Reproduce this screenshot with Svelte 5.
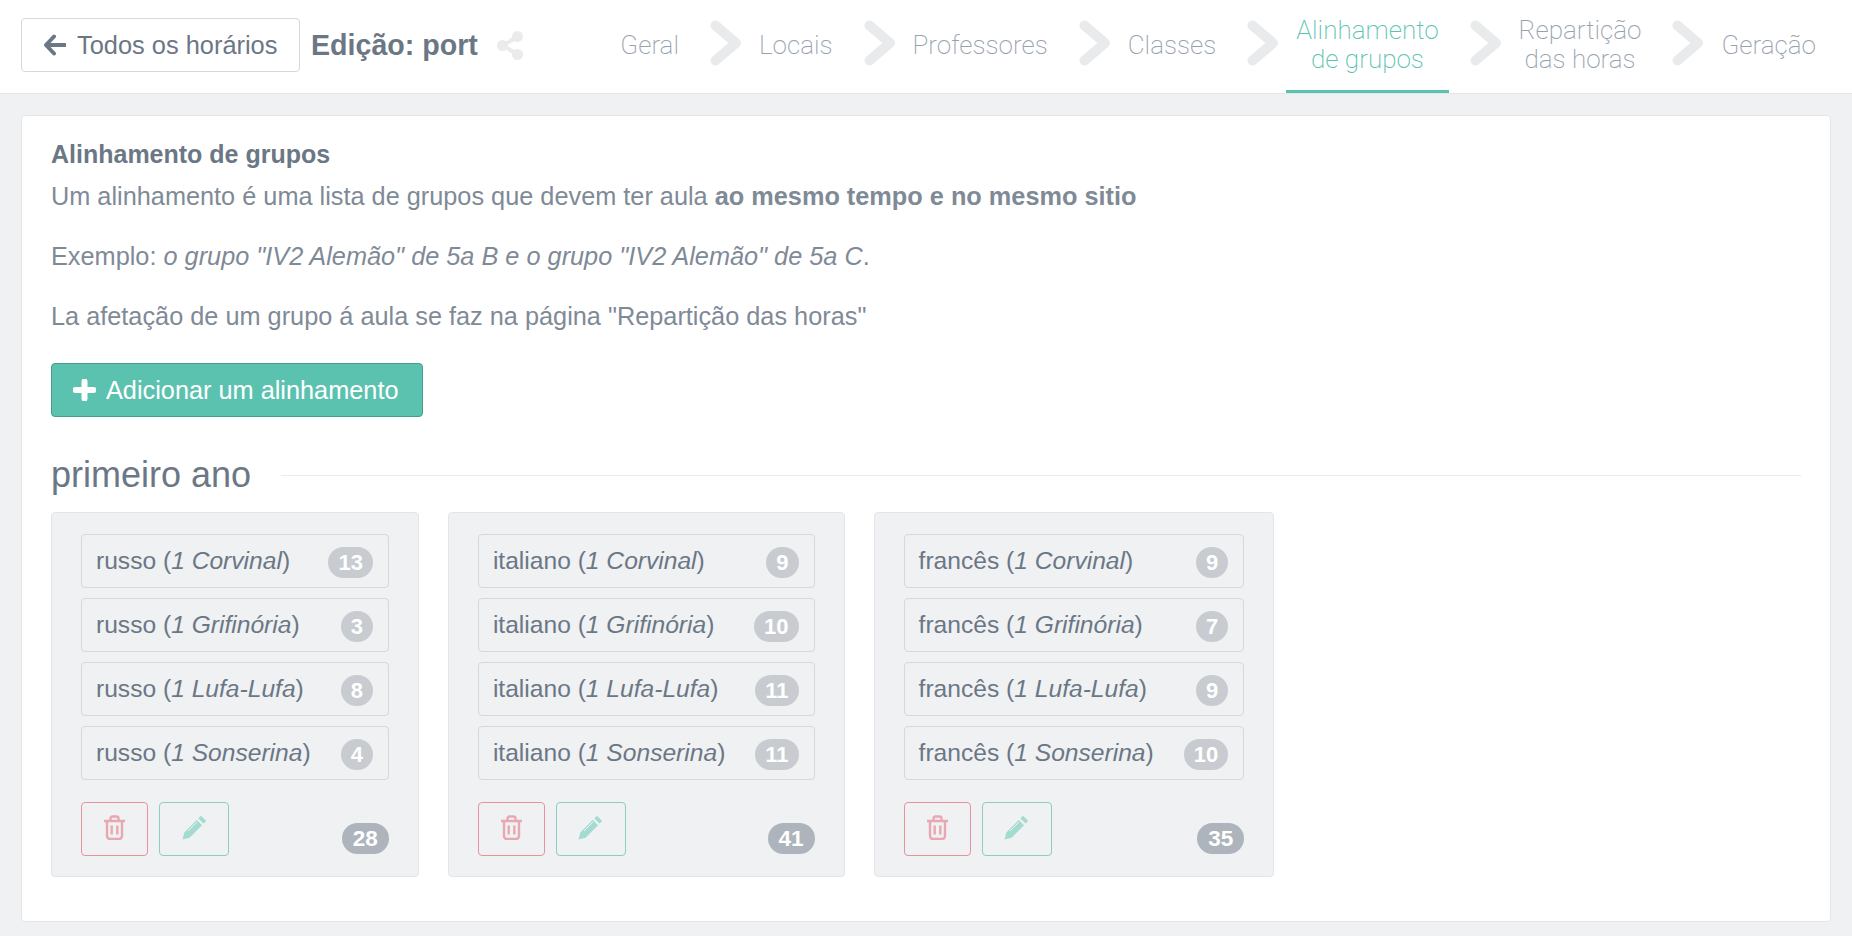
<script>
  const steps = [
    { label: ["Geral"] },
    { label: ["Locais"] },
    { label: ["Professores"] },
    { label: ["Classes"] },
    { label: ["Alinhamento", "de grupos"], active: true },
    { label: ["Repartição", "das horas"] },
    { label: ["Geração"] }
  ];

  const alignments = [
    {
      subject: "russo",
      counts: [13, 3, 8, 4],
      total: 28
    },
    {
      subject: "italiano",
      counts: [9, 10, 11, 11],
      total: 41
    },
    {
      subject: "francês",
      counts: [9, 7, 9, 10],
      total: 35
    }
  ];

  const classes = ["1 Corvinal", "1 Grifinória", "1 Lufa-Lufa", "1 Sonserina"];
</script>

<header class="topbar">
  <button class="back">
    <svg class="back-icon" viewBox="0 0 23 22" width="23" height="22">
      <path d="M11 2.5 3 11l8 8.5M4 11h18" fill="none" stroke="currentColor" stroke-width="4" stroke-linecap="round" stroke-linejoin="round" />
    </svg>
    Todos os horários
  </button>
  <h1 class="title">Edição: port</h1>
  <svg class="share" viewBox="0 0 26 29" width="26" height="29">
    <path d="M20 6 6 14.5 20 23" fill="none" stroke="#e9ebed" stroke-width="4" />
    <circle cx="20.5" cy="5.5" r="5.5" fill="#e9ebed" />
    <circle cx="5.5" cy="14.5" r="5.5" fill="#e9ebed" />
    <circle cx="20.5" cy="23.5" r="5.5" fill="#e9ebed" />
  </svg>

  <nav class="steps">
    {#each steps as step, i}
      {#if i > 0}
        <svg class="chevron" viewBox="0 0 32 46" width="32" height="46">
          <path d="M5.500 5.500 26 23 5.500 40.500" fill="none" stroke="#e9eaec" stroke-width="10" stroke-linecap="round" stroke-linejoin="round" />
        </svg>
      {/if}
      <div class="step" class:active={step.active}>
        <span>
          {#each step.label as line}
            <div>{line}</div>
          {/each}
        </span>
      </div>
    {/each}
  </nav>
</header>

<main class="page">
  <section class="panel">
    <h2 class="panel-title">Alinhamento de grupos</h2>
    <p class="intro">Um alinhamento é uma lista de grupos que devem ter aula <b>ao mesmo tempo e no mesmo sitio</b></p>
    <p>Exemplo: <em>o grupo "IV2 Alemão" de 5a B e o grupo "IV2 Alemão" de 5a C</em>.</p>
    <p>La afetação de um grupo á aula se faz na página "Repartição das horas"</p>

    <button class="add">
      <svg viewBox="0 0 23 22" width="23" height="22">
        <path d="M11.5 2.5v17M2.5 11h18" fill="none" stroke="#fff" stroke-width="6" stroke-linecap="round" />
      </svg>
      Adicionar um alinhamento
    </button>

    <div class="year">
      <h3>primeiro ano</h3>
      <div class="rule"></div>
    </div>

    <div class="cards">
      {#each alignments as a}
        <div class="card">
          {#each classes as c, i}
            <div class="group">
              <span class="group-name">{a.subject} (<em>{c}</em>)</span>
              <span class="badge">{a.counts[i]}</span>
            </div>
          {/each}
          <div class="actions">
            <button class="icon-btn del">
              <svg viewBox="0 0 23 25" width="23" height="25">
                <path d="M1 6h21M4 6v15a3 3 0 0 0 3 3h9a3 3 0 0 0 3-3V6M7.500 6V3.500a2 2 0 0 1 2-2h4a2 2 0 0 1 2 2V6M8.700 10.500v9M14.300 10.500v9" fill="none" stroke="#e8a8b2" stroke-width="2.400" />
              </svg>
            </button>
            <button class="icon-btn edit">
              <svg viewBox="0 0 25 25" width="25" height="25">
                <path d="M19 0.800 24.200 6l-2.600 2.600-5.200-5.200zM14.800 5 20 10.200 7.500 22.700 0.500 24.500 2.300 17.500z" fill="#a3dbd0" />
                <path d="M6 16 15 7" stroke="#eff1f3" stroke-width="1" />
              </svg>
            </button>
            <span class="total">{a.total}</span>
          </div>
        </div>
      {/each}
    </div>
  </section>
</main>

<style>
  :global(body) {
    margin: 0;
    background: #eff1f3;
    font-family: "Liberation Sans", Arial, sans-serif;
    color: #6b7785;
  }

  .topbar {
    display: flex;
    align-items: center;
    height: 93px;
    padding: 0 26px 0 21px;
    background: #fff;
    border-bottom: 1px solid #e3e5e8;
  }

  button {
    font-family: inherit;
    cursor: pointer;
  }

  .back {
    display: flex;
    align-items: center;
    gap: 11px;
    height: 54px;
    width: 279px;
    padding: 0 0 0 21px;
    background: #fff;
    border: 1px solid #d5d8dc;
    border-radius: 4px;
    color: #6b7785;
    font-size: 25.4px;
    margin-bottom: 3px;
  }

  .title {
    margin: 0 0 3px 11px;
    font-size: 28.6px;
    font-weight: bold;
    color: #6b7785;
  }

  .share {
    margin: 0 0 3px 19px;
  }

  .steps {
    display: flex;
    align-items: center;
    margin-left: auto;
    align-self: stretch;
  }

  .step {
    align-self: stretch;
    display: flex;
    align-items: center;
    box-sizing: border-box;
    padding: 0 10px;
    border-bottom: 3px solid transparent;
    text-align: center;
    font-family: Roboto, "Liberation Sans", sans-serif;
    font-weight: 200;
    font-size: 26px;
    line-height: 29px;
    color: #98a2af;
  }

  .step.active {
    color: #5cc2b0;
    border-bottom-color: #5cc2b0;
  }

  .chevron {
    margin: 0 7px 8px 21px;
  }

  .page {
    padding: 21px 21px 14px 21px;
  }

  .panel {
    background: #fff;
    border: 1px solid #e3e5e8;
    border-radius: 4px;
    padding: 21px 29px 43px 29px;
    height: 807px;
    box-sizing: border-box;
  }

  .panel-title {
    margin: 0 0 8px;
    font-size: 25px;
    line-height: 34px;
    font-weight: bold;
  }

  p {
    margin: 0 0 26px;
    font-size: 25.3px;
    line-height: 34px;
    color: #7f8a97;
  }

  .intro b {
    font-weight: bold;
  }

  .add {
    display: flex;
    align-items: center;
    gap: 10px;
    height: 54px;
    width: 372px;
    padding: 0 0 0 21px;
    background: #5cc2b0;
    border: 1px solid #429e8d;
    border-radius: 4px;
    color: #fff;
    font-size: 25.3px;
    margin-top: 30px;
  }

  .year {
    display: flex;
    align-items: center;
    gap: 30px;
    margin-top: 36px;
  }

  .year h3 {
    margin: 0;
    font-size: 36px;
    line-height: 44px;
    font-weight: normal;
  }

  .rule {
    flex: 1;
    height: 1px;
    background: #e9ebed;
  }

  .cards {
    display: flex;
    align-items: flex-start;
    gap: 29px;
    margin-top: 15px;
  }

  .card {
    display: flex;
    flex-direction: column;
    gap: 10px;
    padding: 21px 29px 20px 29px;
    background: #eff1f3;
    border: 1px solid #e3e5e8;
    border-radius: 4px;
  }

  .group {
    display: flex;
    align-items: center;
    justify-content: space-between;
    gap: 30px;
    height: 54px;
    box-sizing: border-box;
    padding: 0 15px 0 14px;
    border: 1px solid #d5d8dc;
    border-radius: 4px;
    font-size: 24.6px;
  }

  .badge {
    height: 31px;
    padding: 0 10px;
    box-sizing: border-box;
    border-radius: 16px;
    background: #c8cbd0;
    color: #fff;
    font-size: 22px;
    font-weight: bold;
    line-height: 31px;
    text-align: center;
    margin-top: 2px;
  }

  .actions {
    display: flex;
    align-items: flex-start;
    gap: 11px;
    margin-top: 12px;
  }

  .icon-btn {
    display: flex;
    align-items: center;
    justify-content: center;
    height: 54px;
    padding: 0 0 3px;
    background: transparent;
    border-radius: 4px;
  }

  .del {
    width: 67px;
    border: 1px solid #e5949f;
  }

  .edit {
    width: 70px;
    border: 1px solid #8fcdbf;
  }

  .total {
    margin: 21px 0 0 auto;
    height: 31px;
    padding: 0 11px;
    border-radius: 16px;
    background: #aeb4bc;
    color: #fff;
    font-size: 22.5px;
    font-weight: bold;
    line-height: 31px;
    text-align: center;
  }
</style>
